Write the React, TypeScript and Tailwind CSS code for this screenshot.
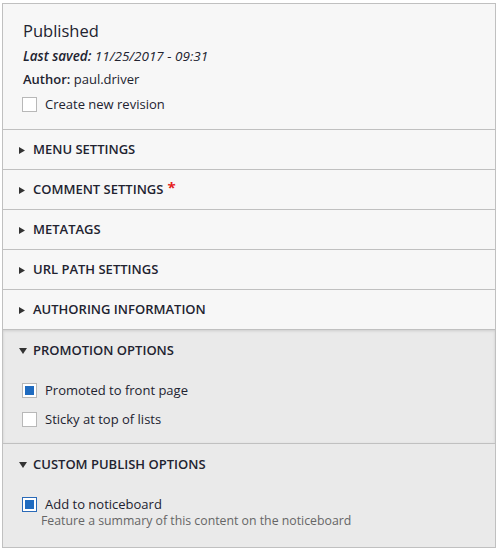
import React from "react";

function RightTri() {
  return (
    <svg width="6" height="7" viewBox="0 0 6 7" className="shrink-0">
      <path d="M0 0 L6 3.5 L0 7 Z" fill="#333" />
    </svg>
  );
}
function DownTri() {
  return (
    <svg width="8" height="6" viewBox="0 0 8 6" className="shrink-0">
      <path d="M0 0 L8 0 L4 6 Z" fill="#333" />
    </svg>
  );
}

function Box({ checked, focus }: { checked?: boolean; focus?: boolean }) {
  return (
    <span
      className={
        "-ml-[1px] flex h-[15px] w-[15px] shrink-0 items-center justify-center border bg-white " +
        (focus ? "border-[#2a6ab8]" : "border-[#b8b8b8]")
      }
    >
      {checked && <span className="block h-[9px] w-[9px] bg-[#1f6bc0]" />}
    </span>
  );
}

function Closed({ label, star }: { label: string; star?: boolean }) {
  return (
    <div className="flex h-[40px] items-center gap-[8px] border-t border-[#c0c0c0] pl-[16px] pt-[1px] text-[13px] font-semibold uppercase text-[#222330]">
      <RightTri />
      <span>{label}</span>
      {star && <span className="-mt-[6px] ml-[-4px] text-[15px] font-bold text-[#e6221e]">*</span>}
    </div>
  );
}

export default function App() {
  return (
    <div className="pl-[2px] pt-[3px]" style={{ fontFamily: '"Open Sans", sans-serif' }}>
      <div className="w-[494px] border border-[#c0c0c0] bg-[#f7f7f7] text-[#222330]">
        <div className="flex h-[125px] flex-col pl-[20px] pt-[16px]">
          <div className="text-[16.5px] leading-[22px]">Published</div>
          <div className="mt-[5px] text-[13.5px] italic leading-[18px]">
            <span className="font-semibold">Last saved:</span> 11/25/2017 - 09:31
          </div>
          <div className="mt-[5px] text-[13px] leading-[18px]">
            <span className="font-semibold">Author:</span> paul.driver
          </div>
          <div className="mt-[7px] flex items-center gap-[8px] text-[13px] leading-[18px]">
            <Box />
            <span>Create new revision</span>
          </div>
        </div>
        <Closed label="Menu settings" />
        <Closed label="Comment settings" star />
        <Closed label="Metatags" />
        <Closed label="URL path settings" />
        <Closed label="Authoring information" />
        <div className="h-[114px] border-t border-[#c0c0c0] bg-[#eaeaea] shadow-[inset_0_1px_3px_rgba(0,0,0,0.12)]">
          <div className="flex h-[40px] items-center gap-[6px] pl-[16px] pt-[1px] text-[13px] font-semibold uppercase">
            <DownTri />
            <span>Promotion options</span>
          </div>
          <div className="flex flex-col gap-[11px] pl-[20px] pt-[11px] text-[13px] leading-[18px]">
            <div className="flex items-center gap-[8px]">
              <Box checked />
              <span>Promoted to front page</span>
            </div>
            <div className="flex items-center gap-[8px]">
              <Box />
              <span>Sticky at top of lists</span>
            </div>
          </div>
        </div>
        <div className="h-[104px] border-t border-[#c0c0c0] bg-[#eaeaea]">
          <div className="flex h-[40px] items-center gap-[6px] pl-[16px] pt-[1px] text-[13px] font-semibold uppercase">
            <DownTri />
            <span>Custom publish options</span>
          </div>
          <div className="pl-[20px] pt-[11px]">
            <div className="flex items-center gap-[8px] text-[13px] leading-[18px]">
              <Box checked focus />
              <span>Add to noticeboard</span>
            </div>
            <div className="pl-[18px] text-[12.3px] leading-[16px] text-[#666]">
              Feature a summary of this content on the noticeboard
            </div>
          </div>
        </div>
      </div>
    </div>
  );
}
